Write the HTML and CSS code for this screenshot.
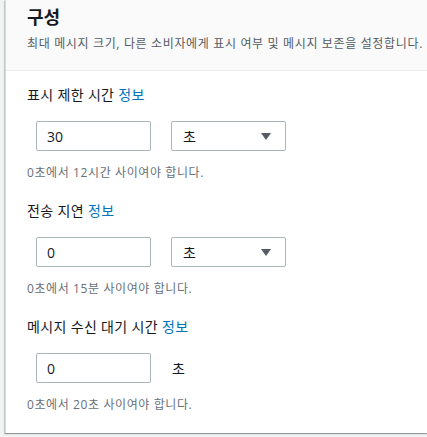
FILE: index.html
```html
<!DOCTYPE html>
<html lang="ko">
<head>
  <meta charset="UTF-8" />
  <title>구성</title>
  <link rel="stylesheet" href="styles.css">
</head>
<body>
  <div class="panel">
    <div class="panel-header">
      <h2>구성</h2>
      <p>최대 메시지 크기, 다른 소비자에게 표시 여부 및 메시지 보존을 설정합니다.</p>
    </div>

    <div class="panel-body">
      <div class="field">
        <label>표시 제한 시간 <a class="info">정보</a></label>
        <div class="controls">
          <input type="text" value="30">
          <div class="select">초<span class="caret"></span></div>
        </div>
        <div class="hint">0초에서 12시간 사이여야 합니다.</div>
      </div>

      <div class="field">
        <label>전송 지연 <a class="info">정보</a></label>
        <div class="controls">
          <input type="text" value="0">
          <div class="select">초<span class="caret"></span></div>
        </div>
        <div class="hint">0초에서 15분 사이여야 합니다.</div>
      </div>

      <div class="field">
        <label>메시지 수신 대기 시간 <a class="info">정보</a></label>
        <div class="controls">
          <input type="text" value="0">
          <span class="unit">초</span>
        </div>
        <div class="hint">0초에서 20초 사이여야 합니다.</div>
      </div>
    </div>
  </div>
</body>
</html>
```

FILE: styles.css
```css
html, body {
  margin: 0;
  overflow: hidden;
}

body {
  font-family: 'Open Sans', 'Noto Sans CJK KR', sans-serif;
  background-color: #f2f3f3;
  color: #16191f;
  padding: 0 0 0 5px;
  height: 437px;
  box-sizing: border-box;
}

.panel {
  background-color: #fff;
  border-left: 1px solid #d5dbdb;
  box-shadow: 0 1px 1px 0 rgba(0, 28, 36, 0.3), -1px 1px 1px 0 rgba(0, 28, 36, 0.15);
}

.panel-header {
  background-color: #fafafa;
  border-bottom: 1px solid #eaeded;
  padding: 4px 0 17px 21px;
}

.panel-header h2 {
  font-size: 18px;
  line-height: 26px;
  font-weight: bold;
  margin: 0;
}

.panel-header p {
  font-size: 12px;
  line-height: 18px;
  letter-spacing: 0.65px;
  color: #545b64;
  margin: 5px 0 0;
  white-space: nowrap;
}

.panel-body {
  padding: 14px 21px 20px;
}

.field + .field {
  margin-top: 20px;
}

label {
  display: block;
  font-size: 14px;
  line-height: 20px;
  letter-spacing: 0.35px;
}

.info {
  color: #0073bb;
  cursor: pointer;
}

.controls {
  display: flex;
  align-items: center;
  gap: 20px;
  margin: 16px 0 0 9px;
}

input {
  width: 115px;
  height: 30px;
  box-sizing: border-box;
  padding: 0 10px;
  border: 1px solid #aab7b8;
  border-radius: 2px;
  font-family: inherit;
  font-size: 14px;
  color: #16191f;
}

.select {
  width: 115px;
  height: 30px;
  box-sizing: border-box;
  padding: 0 14px 0 11px;
  border: 1px solid #aab7b8;
  border-radius: 2px;
  font-size: 14px;
  display: flex;
  align-items: center;
  justify-content: space-between;
}

.caret {
  width: 0;
  height: 0;
  border-left: 5px solid transparent;
  border-right: 5px solid transparent;
  border-top: 7px solid #545b64;
}

.unit {
  font-size: 14px;
  margin-left: 1px;
}

.hint {
  font-size: 12px;
  line-height: 16px;
  letter-spacing: 0.6px;
  color: #687078;
  margin-top: 14px;
}
```
